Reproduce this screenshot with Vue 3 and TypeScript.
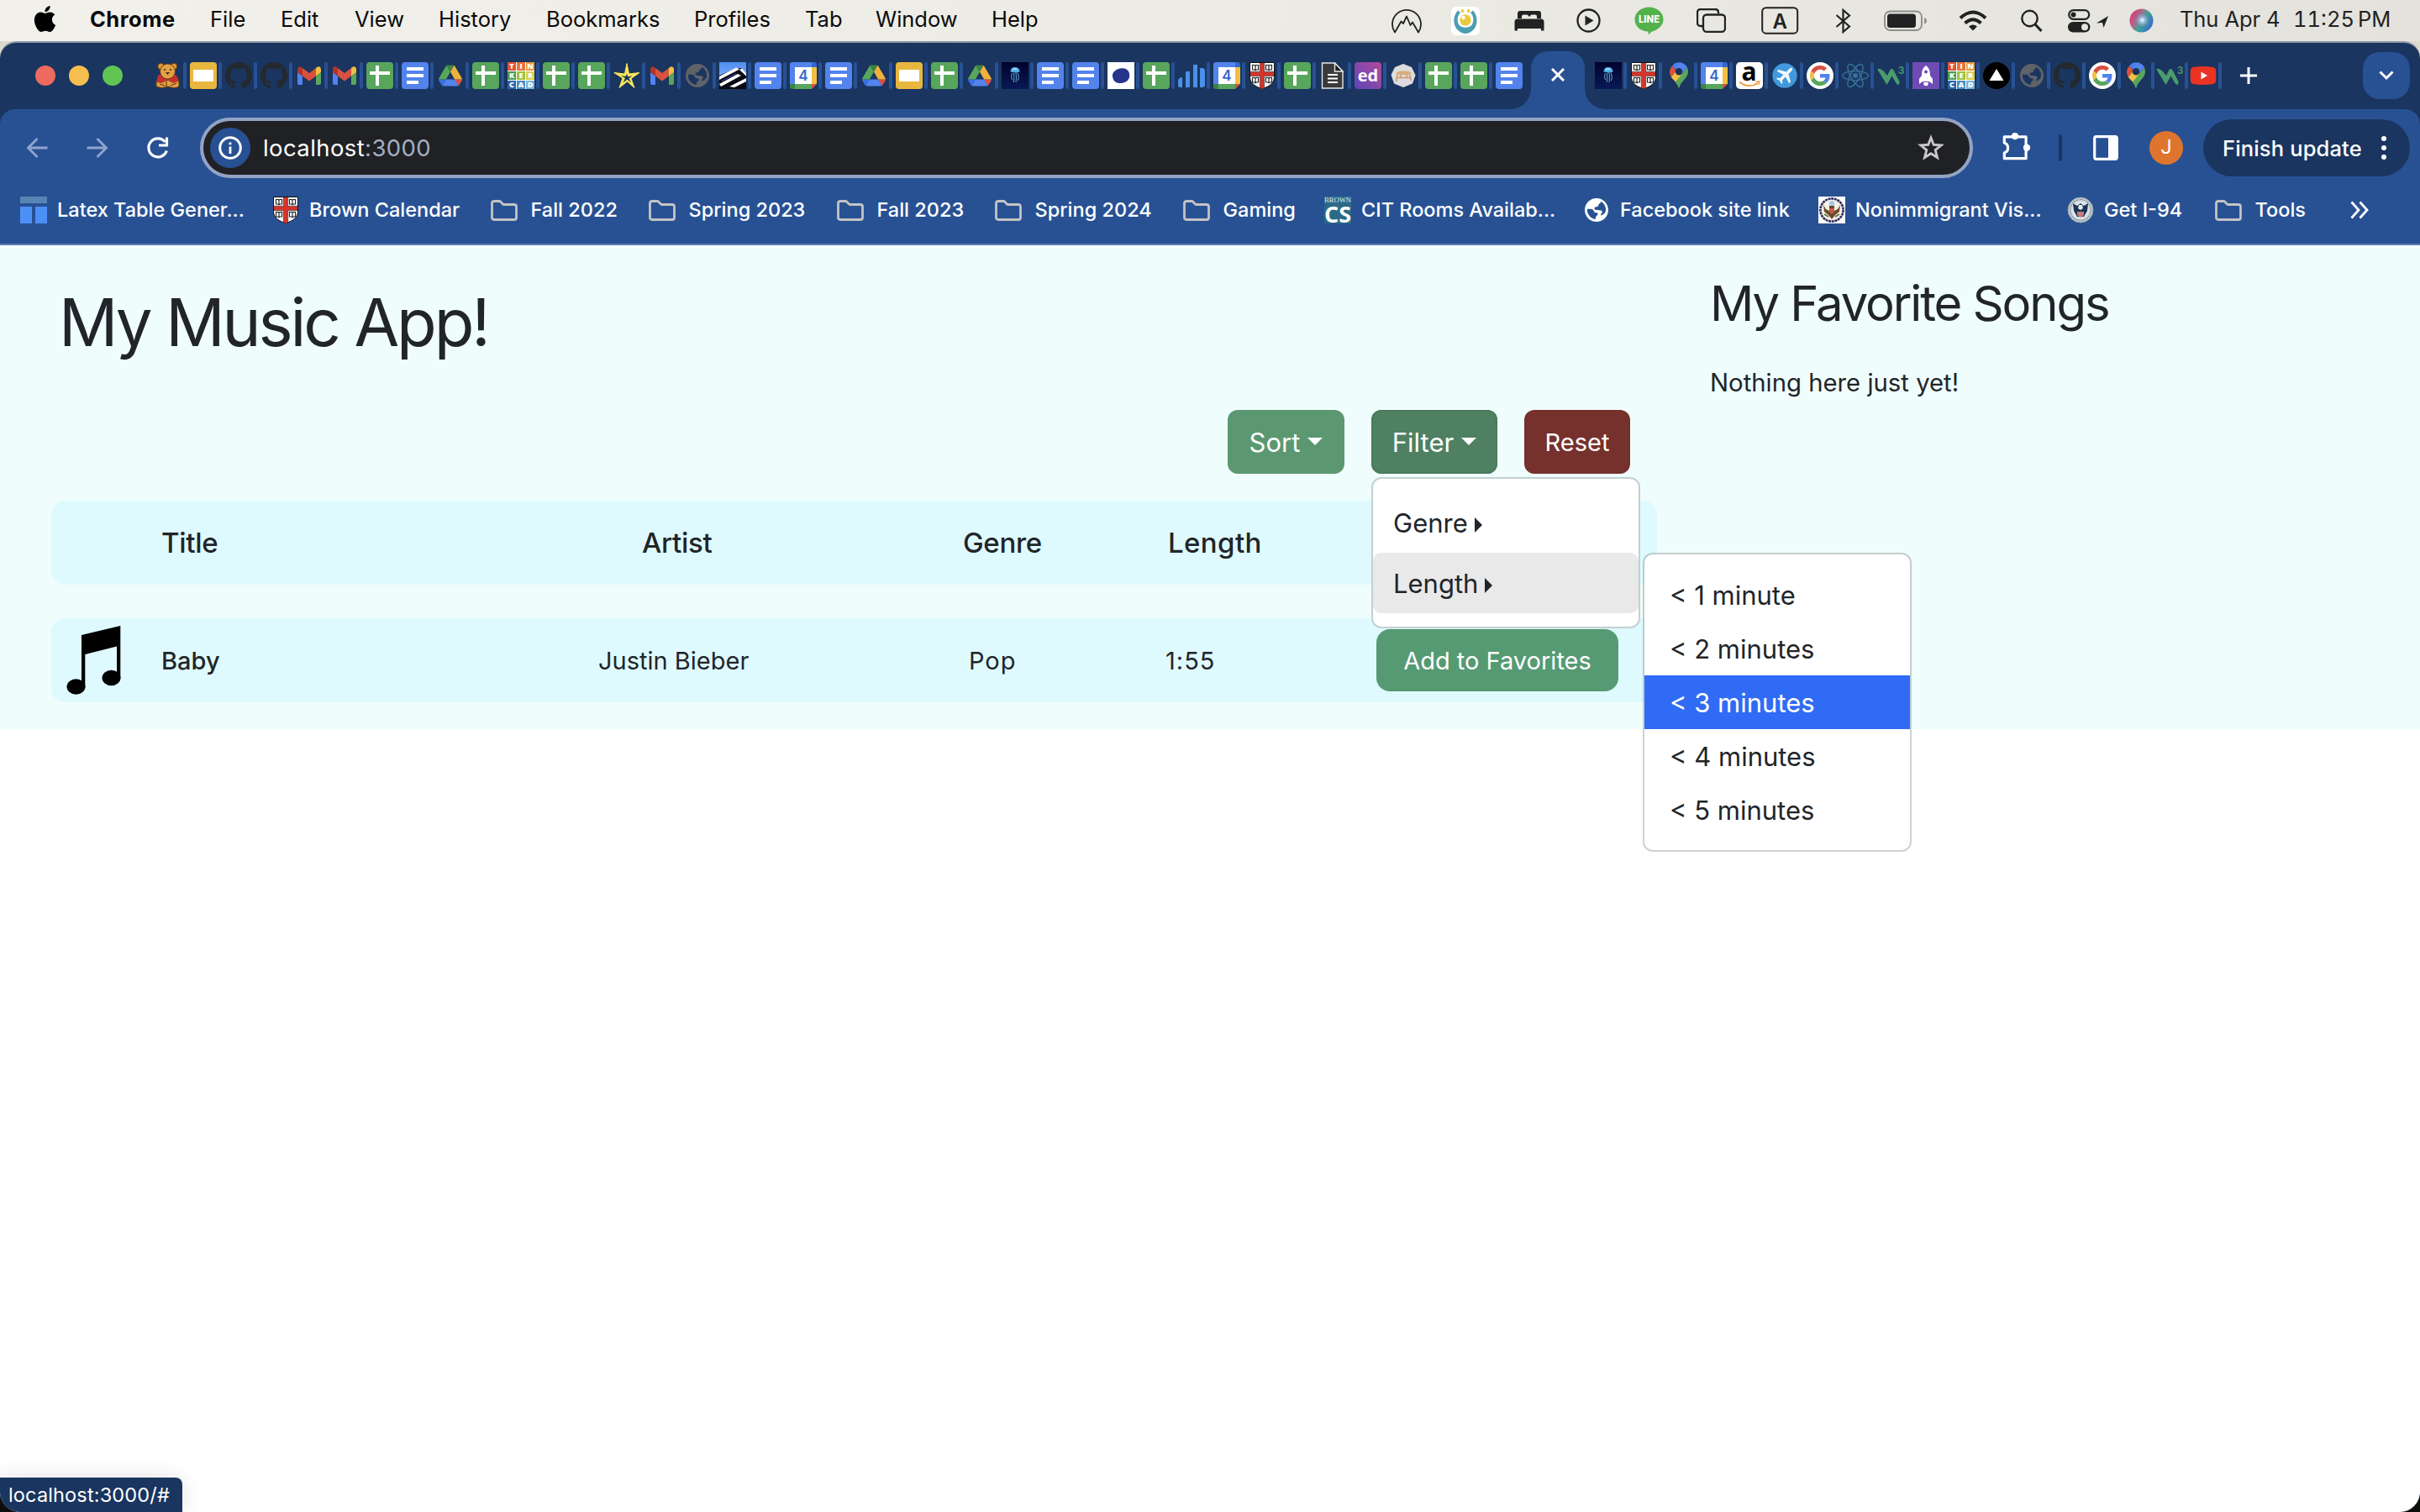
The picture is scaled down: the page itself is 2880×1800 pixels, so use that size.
<script setup lang="ts">
import { ref } from 'vue'

interface Bookmark {
  label: string
  icon: string
}

interface Glyph {
  t: string
  x: number
  y: number
  size: number
  fill: string
  weight: number
  family: string
  fit?: number
}

const menus: string[] = ['Chrome', 'File', 'Edit', 'View', 'History', 'Bookmarks', 'Profiles', 'Tab', 'Window', 'Help']

const leftTabs: string[] = [
  'bear', 'slides', 'github', 'github', 'gmail', 'gmail', 'sheets', 'docs', 'drive', 'sheets',
  'tinkercad', 'sheets', 'sheets', 'star', 'gmail', 'globe', 'piano', 'docs', 'calendar', 'docs',
  'drive', 'slides', 'sheets', 'drive', 'jelly', 'docs', 'docs', 'oval', 'sheets', 'bars',
  'calendar', 'shield', 'sheets', 'paper', 'ed', 'stool', 'sheets', 'sheets', 'docs',
]

const rightTabs: string[] = [
  'jelly', 'shield', 'maps', 'calendar', 'amazon', 'plane', 'google', 'react', 'w3', 'rocket',
  'tinkercad', 'vercel', 'globe', 'github', 'google', 'maps', 'w3', 'youtube',
]

const bookmarks: Bookmark[] = [
  { label: 'Latex Table Gener...', icon: 'latex' },
  { label: 'Brown Calendar', icon: 'shield' },
  { label: 'Fall 2022', icon: 'folder' },
  { label: 'Spring 2023', icon: 'folder' },
  { label: 'Fall 2023', icon: 'folder' },
  { label: 'Spring 2024', icon: 'folder' },
  { label: 'Gaming', icon: 'folder' },
  { label: 'CIT Rooms Availab...', icon: 'browncs' },
  { label: 'Facebook site link', icon: 'globe' },
  { label: 'Nonimmigrant Vis...', icon: 'seal' },
  { label: 'Get I-94', icon: 'dhs' },
  { label: 'Tools', icon: 'folder' },
]

// Lettering that sits on top of the favicon shapes
const sans = "'Open Sans', sans-serif"
const glyphs: Record<string, Glyph[]> = {
  tinkercad: [...'TINKERCAD'].map((t, i) => ({
    t,
    x: 5 + 11 * (i % 3),
    y: 8.3 + 11 * Math.floor(i / 3),
    size: 9,
    fill: '#fff',
    weight: 800,
    family: sans,
  })),
  calendar: [{ t: '4', x: 16, y: 22.3, size: 17, fill: '#3568cf', weight: 600, family: 'Inter, sans-serif' }],
  ed: [{ t: 'ed', x: 16, y: 23, size: 20, fill: '#fff', weight: 700, family: sans }],
  amazon: [{ t: 'a', x: 15.5, y: 21.5, size: 30, fill: '#000', weight: 700, family: sans }],
  w3: [{ t: '3', x: 28.6, y: 14, size: 12, fill: '#4a9b6d', weight: 600, family: 'Inter, sans-serif' }],
  browncs: [
    { t: 'BROWN', x: 16, y: 7, size: 9, fill: '#dfe9ee', weight: 400, family: "'Liberation Serif', serif", fit: 32 },
    { t: 'CS', x: 16, y: 31, size: 27, fill: '#fff', weight: 700, family: sans, fit: 32 },
  ],
}

const lengths: string[] = ['< 1 minute', '< 2 minutes', '< 3 minutes', '< 4 minutes', '< 5 minutes']
const activeLength = ref<string>('< 3 minutes')
</script>

<template>
  <div class="screen">
    <svg class="sprites" width="0" height="0" aria-hidden="true">
      <defs>
        <linearGradient id="edBg" x1="0" y1="1" x2="1" y2="0">
          <stop offset="0" stop-color="#5b46b8" />
          <stop offset="1" stop-color="#b34a9c" />
        </linearGradient>
        <linearGradient id="jellyBg" x1="0" y1="0" x2="0" y2="1">
          <stop offset="0" stop-color="#03022c" />
          <stop offset="1" stop-color="#071a55" />
        </linearGradient>
        <linearGradient id="skyBg" x1="0" y1="0" x2="0" y2="1">
          <stop offset="0" stop-color="#4f8df0" />
          <stop offset="1" stop-color="#9cc3fb" />
        </linearGradient>
        <radialGradient id="siriBg" cx=".5" cy=".5" r=".5">
          <stop offset="0" stop-color="#ffffff" />
          <stop offset=".3" stop-color="#a9c8f2" stop-opacity=".8" />
          <stop offset="1" stop-color="#5a5a8a" stop-opacity="0" />
        </radialGradient>
        <linearGradient id="siriRing" x1="0" y1=".2" x2="1" y2=".8">
          <stop offset="0" stop-color="#e0356f" />
          <stop offset=".35" stop-color="#b06a8c" />
          <stop offset=".55" stop-color="#35a995" />
          <stop offset="1" stop-color="#3c62d8" />
        </linearGradient>
      </defs>

      <symbol id="bear" viewBox="0 0 32 32">
        <circle cx="7.500" cy="5" r="3.800" fill="#d9963a" stroke="#5c3413" stroke-width="1" />
        <circle cx="23" cy="5" r="3.800" fill="#d9963a" stroke="#5c3413" stroke-width="1" />
        <path d="M4 19Q1 24 2 29q6 3 14 0 8 3 13 0 1-6-2-11l-8 4z" fill="#e0a044" stroke="#5c3413" stroke-width="1" />
        <path d="M5 15q-3 4-2 9l6 1 6-4 7 4 6-2q0-5-3-8z" fill="#c4302b" />
        <circle cx="15.500" cy="11" r="9" fill="#e0a044" stroke="#5c3413" stroke-width=".8" />
        <path d="M13 12h5l-2.500 3z" fill="#4a2a10" />
        <circle cx="12" cy="9" r="1.100" fill="#4a2a10" />
        <circle cx="19" cy="9" r="1.100" fill="#4a2a10" />
        <path d="M14 22v9M6 26l6 2M26 25l-7 3" stroke="#6b3d14" stroke-width="1.200" fill="none" />
      </symbol>
      <symbol id="slides" viewBox="0 0 32 32">
        <rect width="32" height="32" rx="4" fill="#e9b73f" />
        <rect x="4" y="9" width="24" height="14" fill="#fff" />
      </symbol>
      <symbol id="sheets" viewBox="0 0 32 32">
        <rect width="32" height="32" rx="4" fill="#58a55c" />
        <path d="M11 4h4v7h13v4H15v13h-4V15H4v-4h7z" fill="#fff" />
      </symbol>
      <symbol id="docs" viewBox="0 0 32 32">
        <rect width="32" height="32" rx="4" fill="#5383ec" />
        <path d="M6 6h20v4H6zM6 14h20v4H6zM6 22h14v4H6z" fill="#fff" />
      </symbol>
      <symbol id="github" viewBox="0 0 16 16">
        <path fill="#24292e" d="M8 0C3.580 0 0 3.580 0 8c0 3.540 2.290 6.530 5.470 7.590.4.070.550-.170.550-.380 0-.190-.010-.820-.010-1.490-2.010.370-2.530-.490-2.690-.940-.090-.230-.480-.940-.820-1.130-.280-.150-.680-.520-.010-.530.630-.010 1.080.580 1.230.820.720 1.210 1.870.870 2.330.660.070-.520.280-.870.510-1.070-1.780-.2-3.640-.890-3.640-3.950 0-.870.310-1.590.820-2.150-.080-.2-.360-1.020.080-2.120 0 0 .670-.210 2.200.820.640-.180 1.320-.270 2-.270.680 0 1.360.090 2 .270 1.530-1.040 2.200-.820 2.200-.820.440 1.100.160 1.920.080 2.120.510.560.820 1.270.820 2.150 0 3.070-1.870 3.750-3.650 3.950.290.250.540.730.540 1.480 0 1.070-.010 1.930-.010 2.200 0 .210.150.460.550.380A8.013 8.013 0 0016 8c0-4.420-3.580-8-8-8z" />
      </symbol>
      <symbol id="gmail" viewBox="0 0 32 32">
        <path d="M2 12l6 4.500V27H4a2 2 0 0 1-2-2z" fill="#5383ec" />
        <path d="M30 12l-6 4.500V27h4a2 2 0 0 0 2-2z" fill="#58a55c" />
        <path d="M24 7l1.500-1.200C27.500 4.300 30 5.500 30 8.500V12l-6 4.500z" fill="#f1bf42" />
        <path d="M8 7v9.500l8 6 8-6V7l-8 6z" fill="#d85140" />
        <path d="M8 7L6.500 5.800C4.500 4.300 2 5.500 2 8.500V12l6 4.500z" fill="#b0362a" />
      </symbol>
      <symbol id="drive" viewBox="-6 -11 99.300 100">
        <path d="m6.600 66.850 3.850 6.650c.8 1.400 1.950 2.500 3.300 3.300l13.750-23.800h-27.500c0 1.550.4 3.100 1.200 4.500z" fill="#3970e4" />
        <path d="m43.650 25-13.750-23.800c-1.350.8-2.500 1.900-3.300 3.300l-25.400 44a9.060 9.060 0 0 0-1.200 4.500h27.500z" fill="#58a55c" />
        <path d="m73.550 76.800c1.350-.8 2.500-1.900 3.300-3.300l1.600-2.750 7.650-13.250c.8-1.400 1.200-2.950 1.200-4.500h-27.500l5.850 11.500z" fill="#d85140" />
        <path d="m43.650 25 13.750-23.800c-1.350-.8-2.900-1.200-4.500-1.200h-18.500c-1.600 0-3.150.450-4.500 1.200z" fill="#3c8442" />
        <path d="m59.800 53h-32.300l-13.750 23.800c1.350.8 2.900 1.200 4.500 1.200h50.800c1.600 0 3.150-.450 4.500-1.200z" fill="#5383ec" />
        <path d="m73.400 26.500-12.700-22c-.8-1.400-1.950-2.500-3.300-3.300l-13.750 23.800 16.150 28h27.450c0-1.550-.4-3.100-1.200-4.500z" fill="#f0b13c" />
      </symbol>
      <symbol id="tinkercad" viewBox="0 0 32 32">
        <rect width="32" height="32" fill="#fff" />
        <rect width="10" height="10" fill="#e3522f" /><rect x="11" width="10" height="10" fill="#e8743a" /><rect x="22" width="10" height="10" fill="#ea9a3e" />
        <rect y="11" width="10" height="10" fill="#4d9e4e" /><rect x="11" y="11" width="10" height="10" fill="#9bc23c" /><rect x="22" y="11" width="10" height="10" fill="#d6cd4c" />
        <rect y="22" width="10" height="10" fill="#2c64a8" /><rect x="11" y="22" width="10" height="10" fill="#4a8fc4" /><rect x="22" y="22" width="10" height="10" fill="#78b4d6" />
      </symbol>
      <symbol id="star" viewBox="0 0 32 32">
        <path d="M16 1.500L18.500 14 31 12.500 21 19.500 25 30.500 16.500 23 7 30.500 11 19 .800 12.500 13.500 14z" fill="#f7e65a" stroke="#f7e65a" stroke-width="1" stroke-linejoin="round" />
        <path d="M16 14l1.500 3.500 5-1.500-4 3.500 2.500 5-4.500-4-5 4 2.500-5.500-5-3 5.500 1z" fill="#1a355f" />
      </symbol>
      <symbol id="globe" viewBox="0 0 24 24">
        <path fill="currentColor" d="M12 1.500C6.200 1.500 1.500 6.200 1.500 12S6.200 22.500 12 22.500 22.500 17.800 22.500 12 17.800 1.500 12 1.500zM11 20.300c-4-.5-7.300-4.200-7.300-8.300l.1-1H7c1.500 0 2.600 1 2.800 2.400.1.700.7 1.100 1.400 1.100h.9c1 0 1.400 1.200.8 1.900l-1.300 1.500c-.5.700-.6 1.500-.6 2.400zM15.800 16.800c-.2-.8.2-1.500.8-2 1-.9.600-2.300-.7-2.500l-4.600-.4c-1.400-.1-1.600-1.900-.4-2.500.7-.4 1.800-.2 2.400-.8.6-.6.2-1.600 1.100-2.200.8-.5 1.600-1 1.400-2.100 2.600 1.300 4.500 4.200 4.500 7.700 0 2.100-1.800 4.200-4.500 4.800z" />
      </symbol>
      <symbol id="piano" viewBox="0 0 32 32">
        <rect width="32" height="32" fill="url(#skyBg)" />
        <path d="M0 16L18 8l8-1 6 8v17H0z" fill="#0a0a14" />
        <path d="M0 17L20 6.500l4 2L0 21zM0 26l22-12 4 2L2 29zM24 9l3-1.500 5 6v3zM12 29l20-10v4L18 30z" fill="#fff" />
        <path d="M3 22.500l17-9" stroke="#2f3f9e" stroke-width="1.200" />
      </symbol>
      <symbol id="calendar" viewBox="0 0 32 32">
        <path d="M3 0h23v6H6v20H0V3a3 3 0 0 1 3-3z" fill="#5383ec" />
        <path d="M26 0h3a3 3 0 0 1 3 3v3h-6z" fill="#3568cf" />
        <path d="M26 6h6v20h-6z" fill="#f1bf42" />
        <path d="M6 26h20v6H6z" fill="#58a55c" />
        <path d="M0 26h6v6H3a3 3 0 0 1-3-3z" fill="#3c8442" />
        <path d="M26 26h6l-6 6z" fill="#d85140" />
        <rect x="6" y="6" width="20" height="20" fill="#fff" />
      </symbol>
      <symbol id="jelly" viewBox="0 0 32 32">
        <rect width="32" height="32" fill="url(#jellyBg)" />
        <path d="M10.500 11.500q0-5.500 5.500-5.500t5.500 5.500q-3 1.500-5.500 1t-5.500-1z" fill="#4fb0e6" />
        <path d="M12.500 13q-2 4 0 8M14.500 13q1 6-.5 11M17 13q1 5 0 11M19.500 13q1.500 5 0 9" stroke="#6fc3e8" stroke-width=".9" fill="none" />
        <path d="M13 9q2-2 5 0" stroke="#d8f1fb" stroke-width="1.200" fill="none" />
      </symbol>
      <symbol id="oval" viewBox="0 0 32 32">
        <rect width="32" height="32" fill="#fff" />
        <path d="M6 17C5 11 13 6 20 7.500c5 1 7 6 6 10.500-1 5-7 7.500-12 7-5-.4-7.500-3.500-8-8z" fill="#27348b" />
      </symbol>
      <symbol id="bars" viewBox="0 0 32 32">
        <path d="M0 22q1-4 5-4v12H2q-2 0-2-2zM9 11h5v19H9zM18 3h5v27h-5zM26 7h4q2 1 2 3v17q0 2-2 3h-4z" fill="#4a90e8" />
      </symbol>
      <symbol id="shield" viewBox="0 0 32 32">
        <path d="M1.500.5h29v17c0 7-5.500 11.500-14.500 14.200C7 29 1.500 24.500 1.500 17.500z" fill="#fff" stroke="#111" stroke-width="1" />
        <path d="M13.500 1h5v30l-2.500.8-2.500-.8zM2 11.500h28v5H2z" fill="#d5342c" />
        <path d="M13.300 1v10.300H2M18.700 1v10.300H30M13.300 31V16.700H2M18.700 31V16.700H30" fill="none" stroke="#111" stroke-width=".6" />
        <g fill="none" stroke="#222" stroke-width="1.100">
          <path d="M4.500 3.500v5.500h2.700l.8.8.8-.8h2.700V3.500H9L8 4.500l-1-1zM8 4.500v5" />
          <path d="M20.500 3.500v5.500h2.700l.8.8.8-.8h2.700V3.500H25l-1 1-1-1zM24 4.500v5" />
          <path d="M4.500 18.500V24h2.700l.8.8.8-.8h2.700v-5.500H9l-1 1-1-1zM8 19.500v5" />
          <path d="M20.500 18.500V24h2.700l.8.8.8-.8h2.700v-5.500H25l-1 1-1-1zM24 19.500v5" />
        </g>
      </symbol>
      <symbol id="paper" viewBox="0 0 32 32">
        <path d="M3.500 1h15L28 11v20H3.500z" fill="#3a3a3a" stroke="#e8e8e8" stroke-width="1.400" />
        <path d="M18.500 1v10H28z" fill="#1d1d1d" stroke="#e8e8e8" stroke-width="1.400" />
        <path d="M10 15h12M10 19.500h12M10 24h12" stroke="#fff" stroke-width="2" />
      </symbol>
      <symbol id="ed" viewBox="0 0 32 32">
        <rect width="32" height="32" rx="4" fill="url(#edBg)" />
      </symbol>
      <symbol id="stool" viewBox="0 0 32 32">
        <path d="M16 2l10 4 4.500 9.500-3.500 10L16 30 5 25.500 1.500 15 6 6z" fill="#dcdcde" />
        <path d="M7 13l5-2.500h10l4 2.500-3 2H9z" fill="#dcab7c" />
        <path d="M9 15L7.500 23M23.500 15l2 7M13 15v4.500M20 15v4.500M9 18.500h15" stroke="#cf9c6e" stroke-width="1.600" />
      </symbol>
      <symbol id="maps" viewBox="0 0 32 32">
        <path d="M8 4.500C10 1.800 13 .3 16 .3l3 .4-6.500 8z" fill="#4b80ea" />
        <path d="M16 .3c4.500 0 8.300 2.400 10 6L19.500 14 12 8.500 18 .5z" fill="#5383ec" />
        <path d="M8 4.500C6 7 5 9.200 5 11.500c0 2.500.7 4.400 1.800 6.300L13 10z" fill="#d85140" />
        <path d="M6.800 17.800l5.700-7 8 3.700-8 9.800c-1.500-2.300-4.500-4.400-5.700-6.500z" fill="#f1bf42" />
        <path d="M26 6.300c.7 1.500 1 3.300 1 5.200 0 8-8.500 10-11 20.200-.9-3.100-2.200-5.400-4.200-7.700z" fill="#58a55c" />
        <circle cx="16" cy="11.300" r="4.200" fill="#1f2f55" />
      </symbol>
      <symbol id="amazon" viewBox="0 0 32 32">
        <rect width="32" height="32" rx="5" fill="#fff" />
        <path d="M4 23.500q11 8.500 22 1.500" fill="none" stroke="#f09b38" stroke-width="1.800" />
        <path d="M23.500 23.300l4.500-.3-1.300 4" fill="none" stroke="#f09b38" stroke-width="1.300" />
      </symbol>
      <symbol id="plane" viewBox="0 0 32 32">
        <circle cx="16" cy="16" r="14.700" fill="#4099dc" />
        <path d="M24.500 7c1 1 .6 2.400-.4 3.400L20.500 14l2.500 9.500-1.800 1.800-4.200-7.800-4 4 .4 3-1.400 1.400-2-4-4-2 1.400-1.400 3 .4 4-4-7.800-4.200 1.800-1.800 9.500 2.500 3.600-3.600c1-1 2.200-1.600 3-.8z" fill="#fff" opacity=".92" />
      </symbol>
      <symbol id="google" viewBox="0 0 64 64">
        <circle cx="32" cy="32" r="32" fill="#fff" />
        <g transform="translate(8 8)">
          <path fill="#d85140" d="M24 9.500c3.540 0 6.710 1.220 9.210 3.600l6.850-6.850C35.900 2.380 30.470 0 24 0 14.620 0 6.510 5.380 2.560 13.220l7.980 6.190C12.430 13.720 17.740 9.500 24 9.500z" />
          <path fill="#5383ec" d="M46.980 24.550c0-1.570-.150-3.090-.380-4.550H24v9.020h12.940c-.580 2.960-2.260 5.480-4.780 7.180l7.730 6c4.510-4.180 7.090-10.360 7.090-17.650z" />
          <path fill="#f1bf42" d="M10.530 28.590c-.480-1.450-.760-2.990-.760-4.590s.270-3.140.760-4.590l-7.980-6.190C.920 16.460 0 20.120 0 24c0 3.880.920 7.540 2.560 10.780l7.970-6.190z" />
          <path fill="#58a55c" d="M24 48c6.480 0 11.930-2.130 15.890-5.810l-7.730-6c-2.150 1.450-4.920 2.300-8.160 2.300-6.260 0-11.570-4.220-13.470-9.910l-7.980 6.190C6.510 42.620 14.620 48 24 48z" />
        </g>
      </symbol>
      <symbol id="react" viewBox="0 0 32 32">
        <circle cx="16" cy="16" r="3" fill="#36749c" />
        <g fill="none" stroke="#36749c" stroke-width="1.400">
          <ellipse cx="16" cy="16" rx="15.300" ry="5.600" />
          <ellipse cx="16" cy="16" rx="15.300" ry="5.600" transform="rotate(60 16 16)" />
          <ellipse cx="16" cy="16" rx="15.300" ry="5.600" transform="rotate(120 16 16)" />
        </g>
      </symbol>
      <symbol id="w3" viewBox="0 0 32 32">
        <path d="M0 8h3.500l4 2.500L12 16l4-8 3 .500 8 15.500-2 3.500-2.500-2.500-5-8.500-6 10.500z" fill="#4a9b6d" />
      </symbol>
      <symbol id="rocket" viewBox="0 0 32 32">
        <rect width="32" height="32" fill="#6e4cb4" />
        <path d="M16 4c4 3 5 7 5 12l3 4v6l-4-3h-8l-4 3v-6l3-4c0-5 1-9 5-12z" fill="#fff" />
        <circle cx="16" cy="11.500" r="2" fill="#6e4cb4" />
        <path d="M13 24h6l-1 4h-4z" fill="#fff" />
      </symbol>
      <symbol id="vercel" viewBox="0 0 32 32">
        <circle cx="16" cy="16" r="16" fill="#000" />
        <path d="M16 8l8.500 14h-17z" fill="#fff" />
      </symbol>
      <symbol id="youtube" viewBox="0 0 32 32">
        <path d="M4 6q12-2 24 0 2.500.4 3 3 .8 7 0 14-.5 2.600-3 3-12 2-24 0-2.500-.4-3-3-.8-7 0-14 .5-2.600 3-3z" fill="#ea3323" />
        <path d="M13.500 11.500l7.500 4.500-7.500 4.500z" fill="#fff" />
      </symbol>
      <symbol id="latex" viewBox="0 0 32 32">
        <rect width="32" height="8" fill="#5786b5" />
        <path d="M0 12h14v20H0zM18 12h14v20H18z" fill="#4c90f7" />
      </symbol>
      <symbol id="folder" viewBox="0 0 32 32">
        <path d="M4.500 5.500h6.500l4 4h13q2.500 0 2.500 2.500v13q0 2.500-2.500 2.500H4q-2.500 0-2.500-2.500V8q0-2.500 3-2.500z" fill="none" stroke="#c4c4c4" stroke-width="2.800" stroke-linejoin="round" />
      </symbol>
      <symbol id="browncs" viewBox="0 0 32 32">
        <rect width="32" height="32" fill="#2b6a86" />
      </symbol>
      <symbol id="seal" viewBox="0 0 32 32">
        <rect width="32" height="32" fill="#fff" />
        <circle cx="16" cy="16" r="13.600" fill="#f4f0e4" stroke="#2d2a5c" stroke-width="2.600" stroke-dasharray="3 .7" />
        <circle cx="16" cy="8.500" r="3.200" fill="#a9c7e8" />
        <path d="M6 10l3 5 4 2v-6h6v6l4-2 3-5-1 8-5 4-4 5-4-5-5-4z" fill="#6b4a2a" />
        <path d="M13 14h6v4l-3 3-3-3z" fill="#c45a4a" />
        <path d="M7 21l5 3M25 21l-5 3" stroke="#5f7a48" stroke-width="2" />
      </symbol>
      <symbol id="dhs" viewBox="0 0 32 32">
        <circle cx="16" cy="16" r="15" fill="#c9d3d8" stroke="#8d9aa3" stroke-width="1" />
        <circle cx="16" cy="16" r="12.500" fill="none" stroke="#7b8b98" stroke-width="1.500" stroke-dasharray="1.500 1" />
        <circle cx="16" cy="16" r="10.500" fill="#dfe5e8" />
        <path d="M7 8l5 3 4-3 4 3 5-3-1 9-4 7h-8l-4-7z" fill="#1c3353" />
        <path d="M12 18h8v4l-4 3-4-3z" fill="#c97b7b" />
        <path d="M14 10h4l1 4-3 2-3-2z" fill="#e6edf2" />
      </symbol>
    </svg>

    <!-- macOS menu bar -->
    <header class="menubar">
      <div class="menus">
        <svg width="31" height="31" viewBox="0 0 24 24"><path d="M12.152 6.896c-.948 0-2.415-1.078-3.960-1.040-2.040.027-3.910 1.183-4.961 3.014-2.117 3.675-.546 9.103 1.519 12.090 1.013 1.454 2.208 3.090 3.792 3.039 1.520-.065 2.090-.987 3.935-.987 1.831 0 2.350.987 3.960.948 1.637-.026 2.676-1.480 3.676-2.948 1.156-1.688 1.636-3.325 1.662-3.415-.039-.013-3.182-1.221-3.220-4.857-.026-3.040 2.480-4.494 2.597-4.559-1.429-2.090-3.623-2.324-4.390-2.376-2-.156-3.675 1.090-4.610 1.090zM15.530 3.830c.843-1.012 1.400-2.427 1.245-3.830-1.207.052-2.662.805-3.532 1.818-.780.896-1.454 2.338-1.273 3.714 1.338.104 2.715-.688 3.559-1.701" /></svg>
        <span v-for="(menu, i) in menus" :key="menu" :class="{ app: i === 0 }">{{ menu }}</span>
      </div>
      <div class="status">
        <svg width="36" height="30" viewBox="0 0 36 30" fill="none" stroke="#222" stroke-width="1.800" stroke-linejoin="round"><path d="M4 28.500A17 17 0 1 1 32 28.500L25 16.500l-2.500 3.500L18 9.500l-4 8.500-2.500-2.500z" /></svg>
        <svg width="34" height="34" viewBox="0 0 34 34"><rect width="34" height="34" rx="6" fill="#fff" /><path d="M8 4.500C2 11 2 21 7 27q5 5 10 5t10-5c5-6 5-16-1-22.500l-3 2.500c4 4 4 10 2 14-3 5-13 5-16 0-2-4-2-10 2-14z" fill="#4b9fb2" /><circle cx="17" cy="16" r="6.700" fill="#ebcb3e" /><circle cx="14.500" cy="13" r="2.200" fill="#fff" /><circle cx="13.500" cy="5" r="2" fill="#ebcb3e" /><circle cx="20.500" cy="5" r="2" fill="#ebcb3e" /></svg>
        <svg width="36" height="26" viewBox="0 0 36 26" fill="#222"><path d="M4 10V4q0-3 3-3h22q3 0 3 3v6h-5V7.500q0-2-2-2h-4q-2 0-2 2h-2q0-2-2-2h-4q-2 0-2 2V10z" /><path d="M.5 14q0-3.500 3.500-3.500h28q3.500 0 3.500 3.500v10.500H32V22H4v2.500H.500z" /></svg>
        <svg width="29" height="29" viewBox="0 0 29 29"><circle cx="14.500" cy="14.500" r="13" fill="none" stroke="#222" stroke-width="2.300" /><path d="M10.500 8.500l10 6-10 6z" fill="#222" /></svg>
        <svg width="35" height="34" viewBox="0 0 35 34"><path d="M17.500.5C27 .5 34.500 7 34.500 15S27 28 20 30q-2 2-3.500 3.500.5-2.500 0-4C7 29.500.5 23 .5 15S8 .5 17.500.5z" fill="#53b14b" /><text x="17.500" y="19.300" text-anchor="middle" fill="#fff" font-size="11.500" font-weight="800" font-family="Inter, sans-serif" textLength="25" lengthAdjust="spacingAndGlyphs">LINE</text></svg>
        <svg width="35" height="29" viewBox="0 0 35 29" fill="none" stroke="#222" stroke-width="2.300"><path d="M7 21H5q-4 0-4-4V5q0-4 4-4h17q4 0 4 4v1" /><rect x="8" y="7.500" width="26" height="20.300" rx="4" /></svg>
        <svg width="45" height="33" viewBox="0 0 45 33"><rect x="1.200" y="1.200" width="42" height="30.500" rx="4.500" fill="none" stroke="#222" stroke-width="2" /><text x="22.200" y="25.500" text-anchor="middle" fill="#222" font-size="24" font-weight="600" font-family="Inter, sans-serif">A</text></svg>
        <svg width="19" height="30" viewBox="0 0 19 30" fill="none" stroke="#222" stroke-width="2.200"><path d="M1.500 8L17 21.500 9.500 28V2L17 8.500 1.500 22" /></svg>
        <svg width="52" height="26" viewBox="0 0 52 26"><rect x="1" y="1.500" width="44" height="22.500" rx="6.500" fill="none" stroke="#8f8e8a" stroke-width="1.900" /><rect x="4" y="4.500" width="34" height="16.500" rx="3.500" fill="#222" /><path d="M48 9q3 1 3 3.700T48 16.500z" fill="#8f8e8a" /></svg>
        <svg width="34" height="26" viewBox="0 0 34 26" fill="none" stroke="#222" stroke-width="4"><path d="M2 9.500Q17-4.500 32 9.500M7.500 15.500q9.500-8.500 19 0" /><path d="M17 24.500l-5-5q5-4 10 0z" fill="#222" stroke="none" /></svg>
        <svg width="26" height="27" viewBox="0 0 26 27" fill="none" stroke="#222" stroke-width="2.400"><circle cx="10.500" cy="11" r="9.200" /><path d="M17 18l7.500 8" stroke-width="3" /></svg>
        <svg width="50" height="28" viewBox="0 0 50 28"><rect x="1.200" y="1.200" width="24" height="10.600" rx="5.300" fill="none" stroke="#222" stroke-width="2.200" /><circle cx="6.500" cy="6.500" r="3" fill="#222" /><rect y="15" width="26.400" height="12.500" rx="6.200" fill="#222" /><circle cx="20" cy="21.200" r="4" fill="#e6e4df" /><path d="M34 16.500L48 8l-5.500 14-1.500-6z" fill="#222" /></svg>
        <svg width="29" height="29" viewBox="0 0 29 29"><circle cx="14.500" cy="14.500" r="14" fill="url(#siriRing)" /><circle cx="15.500" cy="14" r="11" fill="url(#siriBg)" /></svg>
        <span class="date">Thu Apr 4</span>
        <span class="clock">11:25<i>PM</i></span>
      </div>
    </header>

    <div class="window">
      <!-- tab strip -->
      <div class="tabstrip">
        <div class="lights"><i class="red"></i><i class="amber"></i><i class="green"></i></div>
        <div class="tabs">
          <span v-for="(tab, i) in leftTabs" :key="i" class="tab">
            <svg width="32" height="32" viewBox="0 0 32 32">
              <use :href="'#' + tab" width="32" height="32" />
              <text v-for="g in glyphs[tab] ?? []" :key="g.t" :x="g.x" :y="g.y" :fill="g.fill" :font-size="g.size" :font-weight="g.weight" :font-family="g.family" text-anchor="middle">{{ g.t }}</text>
            </svg>
          </span>
        </div>
        <div class="active-tab">
          <svg width="16" height="16" viewBox="0 0 16 16" stroke="#fff" stroke-width="3"><path d="M1 1l14 14M15 1L1 15" /></svg>
        </div>
        <div class="tabs right">
          <span v-for="(tab, i) in rightTabs" :key="i" class="tab" :class="{ tight: i > 14 }">
            <svg width="32" height="32" viewBox="0 0 32 32">
              <use :href="'#' + tab" width="32" height="32" />
              <text v-for="g in glyphs[tab] ?? []" :key="g.t" :x="g.x" :y="g.y" :fill="g.fill" :font-size="g.size" :font-weight="g.weight" :font-family="g.family" text-anchor="middle">{{ g.t }}</text>
            </svg>
          </span>
        </div>
        <svg class="plus" width="22" height="22" viewBox="0 0 22 22" stroke="#fff" stroke-width="3"><path d="M11 1v20M1 11h20" /></svg>
        <div class="tab-search">
          <svg width="18" height="12" viewBox="0 0 18 12" fill="none" stroke="#fff" stroke-width="3"><path d="M1.500 1.500L9 9l7.500-7.500" /></svg>
        </div>
      </div>

      <!-- toolbar -->
      <div class="toolbar">
        <svg class="dim" width="28" height="28" viewBox="0 0 28 28" fill="none" stroke="currentColor" stroke-width="2.800"><path d="M26.500 14H4M14.500 3L3.500 14l11 11" /></svg>
        <svg class="dim fwd" width="28" height="28" viewBox="0 0 28 28" fill="none" stroke="currentColor" stroke-width="2.800"><path d="M1.500 14H24M13.500 3l11 11-11 11" /></svg>
        <svg class="reload" width="30" height="30" viewBox="0 0 30 30" fill="none" stroke="#fff" stroke-width="3.200"><path d="M25.300 18.500A11 11 0 1 1 23.500 8" /><path d="M25.500 2.500v9.500h-9.500" /></svg>
        <div class="omnibox">
          <span class="info"><svg width="28" height="28" viewBox="0 0 28 28"><circle cx="14" cy="14" r="12.300" fill="none" stroke="#fff" stroke-width="3" /><path d="M12.600 12.500h2.800V21h-2.800zM12.600 7.500h2.800v2.800h-2.800z" fill="#fff" /></svg></span>
          <span class="url">localhost<b>:3000</b></span>
          <svg class="fav" width="34" height="34" viewBox="0 0 34 34" fill="none" stroke="#c7c7c7" stroke-width="2.900"><path d="M17 5l3.200 8.300 9 .6-7 5.700 2.300 8.900L17 23.700l-7.500 4.800 2.300-8.900-7-5.700 9-.6z" /></svg>
        </div>
        <svg class="puzzle" width="36" height="36" viewBox="0 0 36 36"><path d="M3.300 4.900H29.100V30.700H3.300V24c3-1 4.300-3.300 4.300-6s-1.300-5-4.300-6z" fill="none" stroke="#fff" stroke-width="3.200" stroke-linejoin="round" /><circle cx="16" cy="4" r="4.200" fill="#fff" /><circle cx="30" cy="17.800" r="4.200" fill="#fff" /></svg>
        <i class="rule"></i>
        <svg class="panel" width="30" height="30" viewBox="0 0 30 30"><rect x="1.700" y="1.700" width="26.600" height="26.600" rx="2" fill="none" stroke="#fff" stroke-width="3.200" /><path d="M18 2h10v26H18z" fill="#fff" /></svg>
        <span class="avatar">J</span>
        <span class="update">Finish update<svg width="6" height="30" viewBox="0 0 6 30" fill="#fff"><circle cx="3" cy="4" r="3" /><circle cx="3" cy="15" r="3" /><circle cx="3" cy="26" r="3" /></svg></span>
      </div>

      <!-- bookmarks -->
      <nav class="bookmarks">
        <span v-for="b in bookmarks" :key="b.label" class="bookmark" :class="b.icon">
          <svg width="32" height="32" viewBox="0 0 32 32">
            <use :href="'#' + b.icon" width="32" height="32" />
            <text v-for="g in glyphs[b.icon] ?? []" :key="g.t" :x="g.x" :y="g.y" :fill="g.fill" :font-size="g.size" :font-weight="g.weight" :font-family="g.family" :textLength="g.fit" lengthAdjust="spacingAndGlyphs" text-anchor="middle">{{ g.t }}</text>
          </svg>
          <span class="label">{{ b.label }}</span>
        </span>
        <svg class="more" width="22" height="22" viewBox="0 0 22 22" fill="none" stroke="#fff" stroke-width="2.800"><path d="M1.500 1.500L10 11l-8.500 9.500M11.500 1.500L20 11l-8.500 9.500" /></svg>
      </nav>

      <!-- page -->
      <div class="viewport">
        <div class="page">
          <main>
            <h1>My Music App!</h1>
            <div class="controls">
              <button class="btn sort">Sort<i class="caret"></i></button>
              <div class="dropdown">
                <button class="btn open">Filter<i class="caret"></i></button>
                <div class="menu">
                  <div class="item">Genre<i class="arrow"></i></div>
                  <div class="item hover">
                    Length<i class="arrow"></i>
                    <ul class="submenu">
                      <li v-for="l in lengths" :key="l" :class="{ active: l === activeLength }" @mouseenter="activeLength = l">{{ l }}</li>
                    </ul>
                  </div>
                </div>
              </div>
              <button class="btn reset">Reset</button>
            </div>
            <div class="row head">
              <span></span><span>Title</span><span>Artist</span><span>Genre</span><span class="len">Length</span>
            </div>
            <div class="row song">
              <svg width="65" height="82" viewBox="0 0 65 82"><path d="M18 11L64.300 0v62H60V24.500L22.300 34v40H18z" /><ellipse cx="53.500" cy="62" rx="11" ry="9.200" /><ellipse cx="11.500" cy="72.500" rx="11" ry="9.200" /></svg>
              <strong>Baby</strong><span>Justin Bieber</span><span class="wide">Pop</span><span class="wide">1:55</span>
              <button class="add">Add to Favorites</button>
            </div>
          </main>
          <aside>
            <h2>My Favorite Songs</h2>
            <p>Nothing here just yet!</p>
          </aside>
        </div>
        <div class="hint">localhost:3000/#</div>
      </div>
    </div>
  </div>
</template>

<style>
body {
  margin: 0;
}
</style>

<style scoped>
* {
  box-sizing: border-box;
}
svg {
  display: block;
  flex: none;
}
i,
b {
  font-style: normal;
  font-weight: inherit;
}
.screen {
  width: 2880px;
  height: 1800px;
  overflow: hidden;
  display: flex;
  flex-direction: column;
  font-family: Inter, 'Liberation Sans', sans-serif;
  color: #212529;
  background: linear-gradient(#dcd9cc 0 900px, #0d0f0b 900px);
}
.sprites {
  position: absolute;
}

/* menu bar */
.menubar {
  height: 49px;
  flex: none;
  display: flex;
  justify-content: space-between;
  font-size: 25.5px;
  line-height: 46px;
  color: #0a0a0a;
  background: linear-gradient(90deg, #f2f0eb, #ecebe4 50%, #e4e2dd);
  white-space: nowrap;
}
.menus {
  display: grid;
  grid-template-columns: 69px 143px 84px 88px 100px 128px 176px 132px 84px 138px 80px;
  padding-left: 38px;
}
.menus svg {
  margin-top: 7px;
}
.app {
  font-weight: 700;
  letter-spacing: 0.5px;
}
.status {
  display: grid;
  grid-template-columns: 71px 75px 74px 69px 74px 77px 88px 58px 89px 74px 56px 73px 60px 135px 151px;
  color: #222;
}
.status svg {
  align-self: center;
}
.date {
  letter-spacing: -0.1px;
}
.clock {
  font-variant-numeric: tabular-nums;
}
.clock i {
  margin-left: 4px;
}

/* window */
.window {
  flex: 1;
  min-height: 0;
  display: flex;
  flex-direction: column;
  border-top: 2px solid #8c97a6;
  border-radius: 20px 20px 24px 24px;
  overflow: hidden;
  background: #1a355f;
}
.tabstrip {
  height: 79px;
  flex: none;
  display: flex;
  align-items: center;
  padding-bottom: 1px;
}
.lights {
  display: flex;
  gap: 16px;
  margin-left: 42px;
  width: 138px;
}
.lights i {
  width: 24px;
  height: 24px;
  border-radius: 50%;
}
.red {
  background: #ed6a5e;
}
.amber {
  background: #f5bf4f;
}
.green {
  background: #61c554;
}
.tabs {
  display: flex;
  color: #5f6368;
}
.tab {
  display: flex;
  align-items: center;
  width: 42px;
  height: 32px;
  padding-left: 4px;
}
.tab::after {
  content: '';
  width: 4px;
  height: 32px;
  margin-left: 2px;
  border-radius: 2px;
  background: #285194;
}
.tabs:not(.right) .tab:last-child::after {
  display: none;
}
.tab.tight {
  width: 40px;
  padding-left: 2px;
}
.active-tab {
  position: relative;
  align-self: flex-end;
  width: 64px;
  height: 69px;
  margin: 0 8px -1px 4px;
  padding-top: 20px;
  display: flex;
  justify-content: center;
  border-radius: 20px 20px 0 0;
  background: #285194;
}
.active-tab::before,
.active-tab::after {
  content: '';
  position: absolute;
  bottom: 0;
  width: 24px;
  height: 24px;
}
.active-tab::before {
  left: -24px;
  background: radial-gradient(circle at 0 0, transparent 23.5px, #285194 24px);
}
.active-tab::after {
  right: -24px;
  background: radial-gradient(circle at 100% 0, transparent 23.5px, #285194 24px);
}
.plus {
  margin-left: 21px;
}
.tab-search {
  margin: 0 12px 0 auto;
  width: 56px;
  height: 56px;
  border-radius: 20px;
  display: grid;
  place-items: center;
  background: #285194;
}

/* toolbar */
.toolbar {
  height: 92px;
  flex: none;
  display: flex;
  align-items: center;
  padding-left: 30px;
  border-radius: 18px 18px 0 0;
  background: #285194;
}
.dim {
  color: #8fa6cc;
}
.fwd {
  margin-left: 44px;
}
.reload {
  margin-left: 43px;
}
.omnibox {
  width: 2110px;
  height: 72px;
  margin-left: 35px;
  display: flex;
  align-items: center;
  padding: 0 29px 0 8px;
  border: 4px solid #94a3c4;
  border-radius: 36px;
  background: #202124;
}
.info {
  width: 48px;
  height: 48px;
  border-radius: 50%;
  display: grid;
  place-items: center;
  background: #285194;
}
.url {
  flex: 1;
  margin-left: 15px;
  font-size: 27.5px;
  letter-spacing: 0.4px;
  color: #fff;
}
.url b {
  color: #a3afc5;
}
.puzzle {
  margin-left: 34px;
}
.rule {
  width: 4px;
  height: 32px;
  margin-left: 32px;
  border-radius: 2px;
  background: #1a355f;
}
.panel {
  margin-left: 37px;
}
.avatar {
  width: 40px;
  height: 40px;
  margin-left: 37px;
  border-radius: 50%;
  text-align: center;
  font: 23px/40px Roboto, sans-serif;
  color: #fff;
  background: #df752c;
}
.update {
  width: 246px;
  height: 68px;
  margin-left: 24px;
  padding: 0 28px 0 23px;
  display: flex;
  align-items: center;
  justify-content: space-between;
  border-radius: 34px;
  font-size: 25.5px;
  font-weight: 500;
  letter-spacing: 0.15px;
  color: #fff;
  white-space: nowrap;
  background: #1a355f;
}

/* bookmarks */
.bookmarks {
  height: 70px;
  flex: none;
  display: grid;
  grid-template-columns: 300px 260px 188px 224px 188px 224px 168px 308px 280px 296px 176px 161px 50px;
  padding: 0 0 12px 24px;
  align-items: center;
  font-size: 23.5px;
  font-weight: 500;
  color: #fff;
  white-space: nowrap;
  border-bottom: 2px solid #5a7bb0;
  background: #285194;
}
.bookmark {
  display: flex;
  align-items: center;
  gap: 12px;
}
.bookmark.folder {
  gap: 15.5px;
}
.label {
  margin-bottom: 2px;
}

/* page */
.viewport {
  flex: 1;
  min-height: 0;
  display: flex;
  flex-direction: column;
  background: #fff;
}
.page {
  height: 576px;
  flex: none;
  display: flex;
  background: #f0fdfd;
}
main {
  width: 1911px;
  margin-left: 61px;
  padding-top: 44px;
}
h1 {
  margin: 0 0 56px 9px;
  font-size: 78px;
  line-height: 96px;
  font-weight: 400;
  letter-spacing: -3.15px;
}
.controls {
  display: flex;
  justify-content: flex-end;
  gap: 32px;
  padding-right: 32px;
}
button {
  border: 0;
  font-family: inherit;
  color: #fff;
}
.btn {
  width: 150px;
  height: 76px;
  padding: 0;
  display: flex;
  align-items: center;
  justify-content: center;
  border-radius: 12px;
  font-size: 31px;
  background: #5b9871;
}
.btn.sort {
  width: 139px;
}
.btn.open {
  background: #4f8062;
  box-shadow: inset 0 0 0 2px #4a7a5c;
}
.btn.reset {
  width: 126px;
  font-size: 29px;
  background: #76312d;
}
.caret {
  width: 0;
  height: 0;
  margin: -1px 0 0 9px;
  border: 9px solid transparent;
  border-top-color: #fff;
  border-bottom: 0;
}
.dropdown {
  position: relative;
}
.menu {
  position: absolute;
  z-index: 2;
  top: 80px;
  left: 0;
  width: 320px;
  padding: 16px 0;
  border: 2px solid #c3d0d1;
  border-radius: 12px;
  background: #fff;
}
.item {
  position: relative;
  height: 72px;
  padding-left: 24px;
  display: flex;
  align-items: center;
  border-radius: 10px;
  font-size: 31px;
}
.item.hover {
  background: #e9e9e9;
}
.arrow {
  width: 0;
  height: 0;
  margin: 6px 0 0 8px;
  border: 9px solid transparent;
  border-left-color: #212529;
  border-right: 0;
}
.submenu {
  position: absolute;
  top: 0;
  left: 321px;
  width: 320px;
  margin: 0;
  padding: 16px 0;
  border: 2px solid rgba(0, 0, 0, 0.18);
  border-radius: 12px;
  list-style: none;
  background: #fff;
  background-clip: padding-box;
}
.submenu li {
  height: 64px;
  padding-left: 30px;
  line-height: 65px;
}
.submenu .active {
  color: #fff;
  background: #306bf5;
}
.row {
  height: 100px;
  display: grid;
  align-items: center;
  border-radius: 16px;
  background: #dffafe;
}
.head {
  margin-top: 32px;
  grid-template-columns: 131px 572px 382px 244px 1fr;
  font-size: 33px;
  font-weight: 500;
  letter-spacing: -0.3px;
}
.len {
  letter-spacing: 0.4px;
}
.song {
  margin-top: 40px;
  grid-template-columns: 19px 112px 520px 441px 234px 251px 288px;
  font-size: 29px;
}
.song svg {
  grid-column: 2;
  margin-left: -1px;
}
.song strong {
  font-weight: 500;
}
.wide {
  letter-spacing: 1px;
}
.add {
  height: 74px;
  padding: 0;
  border-radius: 16px;
  font-size: 29px;
  background: #559a73;
}
aside {
  margin-left: 63px;
  padding-top: 33px;
}
h2 {
  margin: 0;
  font-size: 58px;
  line-height: 72px;
  font-weight: 400;
  letter-spacing: -2.1px;
}
p {
  margin: 36px 0 0;
  font-size: 29.3px;
  line-height: 45px;
}
.hint {
  margin-top: auto;
  width: 217px;
  height: 41px;
  padding-left: 10px;
  font-size: 23.5px;
  line-height: 41px;
  letter-spacing: 0.15px;
  color: #fff;
  border-top-right-radius: 8px;
  background: #1a355f;
  box-shadow: 0 0 24px rgba(0, 0, 0, 0.12);
}
</style>
